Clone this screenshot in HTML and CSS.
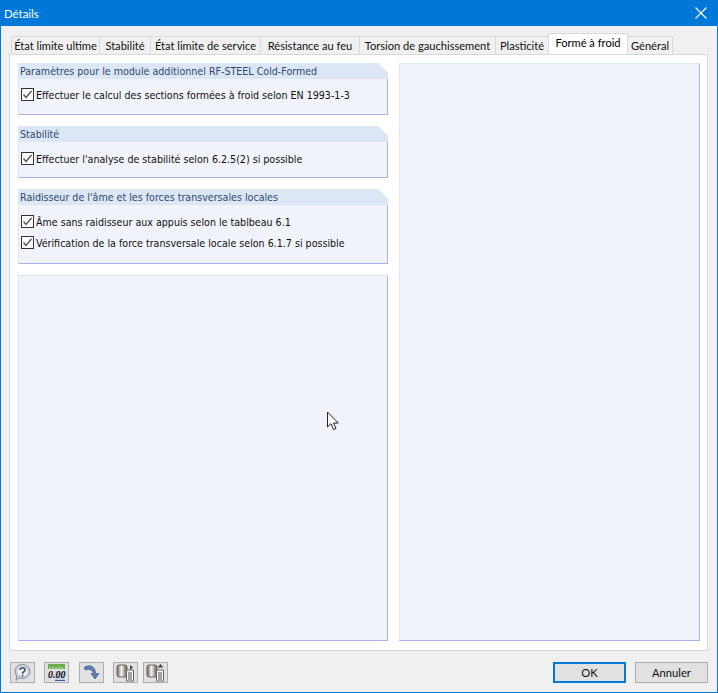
FILE: index.html
```html
<!DOCTYPE html>
<html lang="fr">
<head>
    <meta charset="UTF-8">
    <title>Détails</title>
    <link rel="stylesheet" href="styles.css">
</head>
<body>
    <div class="window">
        <div class="titlebar">
            <span class="title">Détails</span>
            <svg class="close" width="14" height="14" viewBox="0 0 14 14"><path d="M1.5 1.5L12.5 12.5M12.5 1.5L1.5 12.5" stroke="#fff" stroke-width="1.2" fill="none"/></svg>
        </div>
        <div class="content">
            <div class="tabs">
                <div class="tab">État limite ultime</div>
                <div class="tab">Stabilité</div>
                <div class="tab">État limite de service</div>
                <div class="tab">Résistance au feu</div>
                <div class="tab">Torsion de gauchissement</div>
                <div class="tab">Plasticité</div>
                <div class="tab active">Formé à froid</div>
                <div class="tab">Général</div>
            </div>
            <div class="pane">
                <div class="column">
                    <div class="group group-one">
                        <div class="group-title">Paramètres pour le module additionnel RF-STEEL Cold-Formed</div>
                        <div class="group-body">
                            <label class="check"><svg class="box" width="13" height="13" viewBox="0 0 13 13"><rect x="0.5" y="0.5" width="12" height="12" fill="#fff" stroke="#333"/><path d="M2.5 6.500L5 9.500L10.500 3" stroke="#555" stroke-width="1.4" fill="none"/></svg>Effectuer le calcul des sections formées à froid selon EN 1993-1-3</label>
                        </div>
                    </div>
                    <div class="group group-one">
                        <div class="group-title">Stabilité</div>
                        <div class="group-body">
                            <label class="check"><svg class="box" width="13" height="13" viewBox="0 0 13 13"><rect x="0.5" y="0.5" width="12" height="12" fill="#fff" stroke="#333"/><path d="M2.5 6.500L5 9.500L10.500 3" stroke="#555" stroke-width="1.4" fill="none"/></svg>Effectuer l'analyse de stabilité selon 6.2.5(2) si possible</label>
                        </div>
                    </div>
                    <div class="group group-two">
                        <div class="group-title">Raidisseur de l'âme et les forces transversales locales</div>
                        <div class="group-body">
                            <label class="check"><svg class="box" width="13" height="13" viewBox="0 0 13 13"><rect x="0.5" y="0.5" width="12" height="12" fill="#fff" stroke="#333"/><path d="M2.5 6.500L5 9.500L10.500 3" stroke="#555" stroke-width="1.4" fill="none"/></svg>Âme sans raidisseur aux appuis selon le tablbeau 6.1</label>
                            <label class="check"><svg class="box" width="13" height="13" viewBox="0 0 13 13"><rect x="0.5" y="0.5" width="12" height="12" fill="#fff" stroke="#333"/><path d="M2.5 6.500L5 9.500L10.500 3" stroke="#555" stroke-width="1.4" fill="none"/></svg>Vérification de la force transversale locale selon 6.1.7 si possible</label>
                        </div>
                    </div>
                    <div class="empty-panel"></div>
                </div>
                <div class="column right">
                    <div class="empty-panel"></div>
                </div>
            </div>
            <div class="footer">
                <div class="tool-buttons">
                    <button class="tool">
                        <svg width="19" height="19" viewBox="0 0 19 19"><path d="M9.500 1.500a7.500 7 0 1 1-3.500 13.200L3 17.500l.6-4.400A7.500 7 0 0 1 9.500 1.500z" fill="#c9ced6" stroke="#8a8f98"/><circle cx="9.500" cy="8.500" r="5" fill="#eef0f4"/><path d="M7 6.800c.3-2.600 5-2.600 5 .1 0 1.900-2.500 1.900-2.500 3.800" fill="none" stroke="#4a5a78" stroke-width="1.800"/><rect x="8.600" y="11.800" width="1.800" height="1.800" fill="#4a5a78"/></svg>
                    </button>
                    <button class="tool">
                        <svg width="21" height="19" viewBox="0 0 21 19"><rect x="2" y="1" width="17" height="5" fill="#6fae4e"/><path d="M4 4v2M7 4v2M10 4v2M13 4v2M16 4v2" stroke="#cfe6c0"/><rect x="9" y="8" width="10" height="10" fill="#c5cfe6"/><text x="2" y="15" class="tool-digits">0.00</text><path d="M9 17.500h10" stroke="#3a5a9a"/></svg>
                    </button>
                    <button class="tool">
                        <svg width="19" height="19" viewBox="0 0 19 19"><path d="M2 5C5 1.500 11 2 13 7l.8 3.500H17l-4 5.500-4-5.500h2.400C11 8 8 5 3.500 7z" fill="#5b7cb4" stroke="#34507f" stroke-width=".6"/></svg>
                    </button>
                    <button class="tool">
                        <svg width="20" height="19" viewBox="0 0 20 19"><defs><linearGradient id="drum-a"><stop offset="0" stop-color="#6b6258"/><stop offset=".45" stop-color="#f6f3ec"/><stop offset="1" stop-color="#5c5650"/></linearGradient></defs><rect x="1" y="2" width="10" height="12" rx="2" fill="url(#drum-a)" stroke="#6a655e"/><path d="M10.500 7h7v11h-7z" fill="#f4f4f4" stroke="#666"/><path d="M12 10h4M12 12h4M12 14h4M12 16h4" stroke="#555"/><path d="M14 2l3 2.500-3 2.500z" fill="#444"/></svg>
                    </button>
                    <button class="tool">
                        <svg width="20" height="19" viewBox="0 0 20 19"><defs><linearGradient id="drum-b"><stop offset="0" stop-color="#6b6258"/><stop offset=".45" stop-color="#f6f3ec"/><stop offset="1" stop-color="#5c5650"/></linearGradient></defs><rect x="1" y="2" width="10" height="12" rx="2" fill="url(#drum-b)" stroke="#6a655e"/><path d="M10.500 7h7v11h-7z" fill="#f4f4f4" stroke="#666"/><path d="M12 10h4M12 12h4M12 14h4M12 16h4" stroke="#555"/><path d="M14.500 1l3 3.500h-6z" fill="#444"/></svg>
                    </button>
                </div>
                <div class="dialog-buttons">
                    <button class="btn default">OK</button>
                    <button class="btn">Annuler</button>
                </div>
            </div>
        </div>
        <svg class="cursor" width="14" height="20" viewBox="0 0 14 20"><path d="M1.500 1v15l3.500-3.300 2.500 5.800 2.500-1-2.500-5.500h4.800z" fill="#fff" stroke="#222" stroke-width="1"/></svg>
    </div>
</body>
</html>
```

FILE: styles.css
```css
* {
    box-sizing: border-box;
}
html, body {
    margin: 0;
    padding: 0;
}
body {
    font-family: "DejaVu Sans", sans-serif;
    font-stretch: condensed;
    font-size: 10.6px;
    color: #111;
}
.window {
    position: relative;
    width: 718px;
    height: 693px;
    background: #f0f0f0;
    border: 1px solid #0078d7;
    border-top: 0;
    display: flex;
    flex-direction: column;
}
.titlebar {
    height: 26px;
    background: #0078d7;
    color: #fff;
    display: flex;
    align-items: center;
    justify-content: space-between;
    padding: 0 9px 0 3px;
    font-family: Lato, sans-serif;
    font-size: 11.4px;
    flex: none;
}
.content {
    flex: 1;
    display: flex;
    flex-direction: column;
    padding: 8px 9px 0 8px;
}
.tabs {
    display: grid;
    grid-template-columns: 89px 51px 110px 99px 136px 53px 79px 45px;
    height: 20px;
    padding-left: 2px;
    align-items: end;
    position: relative;
    z-index: 1;
    font-family: Lato, sans-serif;
    font-size: 11.1px;
}
.tab {
    height: 18px;
    background: #f0f0f0;
    border: 1px solid #d9d9d9;
    border-left-width: 0;
    border-bottom-width: 0;
    text-align: center;
    line-height: 18px;
    white-space: nowrap;
}
.tab:first-child {
    border-left-width: 1px;
}
.tab.active {
    height: 21px;
    margin-top: -1px;
    background: #fff;
    border-left-width: 1px;
    margin-left: -1px;
    line-height: 18px;
    color: #000;
}
.pane {
    height: 597px;
    background: #fff;
    border: 1px solid #d9d9d9;
    display: flex;
    gap: 11px;
    padding: 8px 6px 9px 8px;
}
.column {
    width: 370px;
    display: flex;
    flex-direction: column;
    gap: 11px;
}
.column.right {
    width: 301px;
}
.group {
    background: #f0f3f9;
    border-right: 1px solid #b0b0e8;
    border-bottom: 1px solid #b0b0e8;
    border-left: 1px solid #e2e8f2;
    flex: none;
    clip-path: polygon(0 0, calc(100% - 10px) 0, 100% 10px, 100% 100%, 0 100%);
}
.group-one {
    height: 52px;
}
.group-two {
    height: 75px;
}
.group-title {
    height: 16px;
    margin: 0 -1px;
    padding-left: 2px;
    background: #dce6f4;
    color: #2e4a6e;
    line-height: 17px;
}
.group-body {
    display: flex;
    flex-direction: column;
    gap: 6px;
    padding: 8px 0 0 2px;
}
.group + .group .group-body {
    padding-top: 9px;
}
.check {
    display: flex;
    align-items: center;
    height: 15px;
    white-space: nowrap;
}
.box {
    margin-right: 2px;
    flex: none;
}
.empty-panel {
    flex: 1;
    background: #f0f3f9;
    border-top: 1px solid #e2e8f2;
    border-left: 1px solid #e2e8f2;
    border-right: 1px solid #b0b0e8;
    border-bottom: 1px solid #b0b0e8;
}
.footer {
    display: flex;
    justify-content: space-between;
    padding: 11px 0 0 1px;
}
.tool-buttons {
    display: flex;
}
.tool {
    width: 25px;
    height: 21px;
    padding: 0;
    background: #e1e1e1;
    border: 1px solid #adadad;
    display: flex;
    align-items: center;
    justify-content: center;
    margin-right: 9px;
}
.tool:nth-child(2) {
    margin-right: 10px;
}
.tool:nth-child(4) {
    margin-right: 5px;
}
.tool-digits {
    font-family: "Liberation Serif", serif;
    font-size: 10px;
    font-style: italic;
    font-weight: bold;
    fill: #111;
}
.dialog-buttons {
    display: flex;
    gap: 9px;
}
.btn {
    width: 73px;
    height: 21px;
    padding: 0;
    background: #e1e1e1;
    border: 1px solid #adadad;
    font-family: Lato, sans-serif;
    font-size: 11.2px;
    color: #111;
}
.btn.default {
    border: 2px solid #0078d7;
}
.close {
    display: block;
}
.cursor {
    position: absolute;
    left: 325px;
    top: 411px;
}
```
